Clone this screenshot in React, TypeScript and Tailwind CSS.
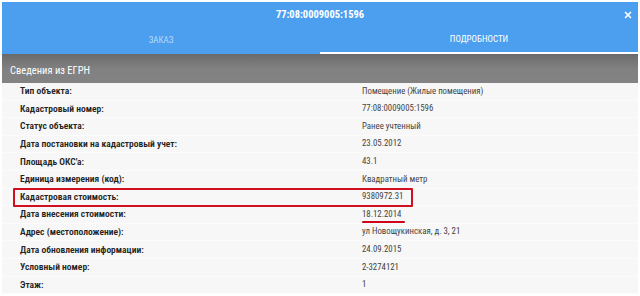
import { X } from "lucide-react";

const rows: [string, string][] = [
  ["Тип объекта:", "Помещение (Жилые помещения)"],
  ["Кадастровый номер:", "77:08:0009005:1596"],
  ["Статус объекта:", "Ранее учтенный"],
  ["Дата постановки на кадастровый учет:", "23.05.2012"],
  ["Площадь ОКС'а:", "43.1"],
  ["Единица измерения (код):", "Квадратный метр"],
  ["Кадастровая стоимость:", "9380972.31"],
  ["Дата внесения стоимости:", "18.12.2014"],
  ["Адрес (местоположение):", "ул Новощукинская, д. 3, 21"],
  ["Дата обновления информации:", "24.09.2015"],
  ["Условный номер:", "2-3274121"],
  ["Этаж:", "1"],
];

export default function App() {
  return (
    <div className="w-[640px] h-[296px] overflow-hidden bg-white px-[2px] pt-[2px] font-['Roboto',sans-serif] font-stretch-condensed">
      <div className="bg-[#4b9fee] h-[52px] flex flex-col">
        <div className="relative h-[25px] flex items-center justify-center">
          <span className="text-white text-[10.5px] font-bold">77:08:0009005:1596</span>
          <X className="absolute right-[5px] top-[8px] text-white" size={10} strokeWidth={4} />
        </div>
        <div className="flex flex-1 uppercase text-[9px]">
          <div className="flex-1 flex items-center justify-center text-white/60">Заказ</div>
          <div className="flex-1 flex items-center justify-center text-white border-b-2 border-white">Подробности</div>
        </div>
      </div>
      <div className="h-[29px] bg-gradient-to-b from-[#6a6a6a] via-[#818181] to-[#838383] flex items-center pl-[8px] pt-[4px]">
        <span className="text-white text-[10.5px]">Сведения из ЕГРН</span>
      </div>
      <div className="bg-[#f7f7f7]">
        {rows.map(([label, value], i) => (
          <div key={i} className="relative h-[17.6px] flex items-center border-b border-[#fbfbfb]">
            <div className="w-[360px] pl-[18px] font-semibold text-[#222] text-[9.5px]">{label}</div>
            <div className="text-[#444] text-[8.8px]">
              {i === 7 ? (
                <span className="relative">
                  {value}
                  <span className="absolute left-0 right-[-4px] bottom-[-4px] h-[2px] bg-[#d0021b] rounded" />
                </span>
              ) : (
                value
              )}
            </div>
            {i === 6 && (
              <div className="absolute left-[11px] top-[-1px] w-[400px] h-[19px] border-2 border-[#d0101e] rounded-[1px]" />
            )}
          </div>
        ))}
      </div>
    </div>
  );
}
